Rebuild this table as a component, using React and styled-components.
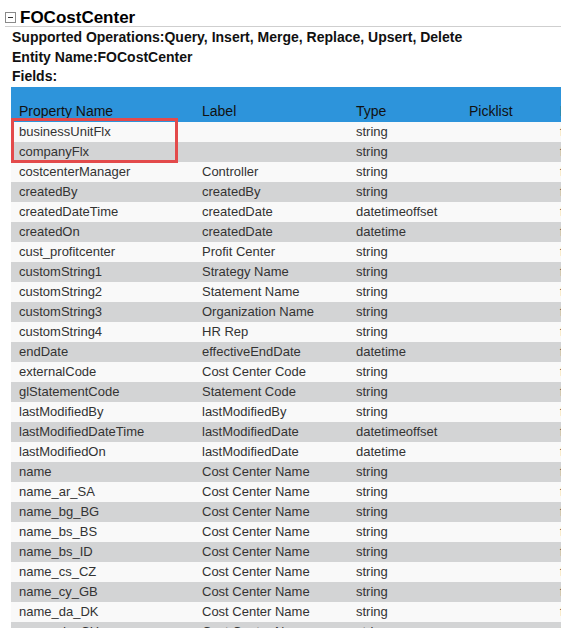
import React from 'react'
import styled, { createGlobalStyle } from 'styled-components'

const GlobalStyle = createGlobalStyle`
  html, body {
    margin: 0;
    padding: 0;
    background: #fff;
    overflow: hidden;
  }
  body {
    font-family: "Liberation Sans", Arial, sans-serif;
    color: #222;
  }
`

const fields = [
  ['businessUnitFlx', '', 'string'],
  ['companyFlx', '', 'string'],
  ['costcenterManager', 'Controller', 'string'],
  ['createdBy', 'createdBy', 'string'],
  ['createdDateTime', 'createdDate', 'datetimeoffset'],
  ['createdOn', 'createdDate', 'datetime'],
  ['cust_profitcenter', 'Profit Center', 'string'],
  ['customString1', 'Strategy Name', 'string'],
  ['customString2', 'Statement Name', 'string'],
  ['customString3', 'Organization Name', 'string'],
  ['customString4', 'HR Rep', 'string'],
  ['endDate', 'effectiveEndDate', 'datetime'],
  ['externalCode', 'Cost Center Code', 'string'],
  ['glStatementCode', 'Statement Code', 'string'],
  ['lastModifiedBy', 'lastModifiedBy', 'string'],
  ['lastModifiedDateTime', 'lastModifiedDate', 'datetimeoffset'],
  ['lastModifiedOn', 'lastModifiedDate', 'datetime'],
  ['name', 'Cost Center Name', 'string'],
  ['name_ar_SA', 'Cost Center Name', 'string'],
  ['name_bg_BG', 'Cost Center Name', 'string'],
  ['name_bs_BS', 'Cost Center Name', 'string'],
  ['name_bs_ID', 'Cost Center Name', 'string'],
  ['name_cs_CZ', 'Cost Center Name', 'string'],
  ['name_cy_GB', 'Cost Center Name', 'string'],
  ['name_da_DK', 'Cost Center Name', 'string'],
  ['name_de_CH', 'Cost Center Name', 'string'],
]

export default function App() {
  return (
    <>
      <GlobalStyle />
      <Page>
        <TitleBar>
          <Toggle />
          <Title>FOCostCenter</Title>
        </TitleBar>
        <Info>
          <InfoLine>Supported Operations:Query, Insert, Merge, Replace, Upsert, Delete</InfoLine>
          <InfoLine>Entity Name:FOCostCenter</InfoLine>
          <InfoLine>Fields:</InfoLine>
        </Info>
        <TableWrap>
          <Table>
            <colgroup>
              <col style={{ width: 183 }} />
              <col style={{ width: 154 }} />
              <col style={{ width: 113 }} />
              <col style={{ width: 91 }} />
              <col style={{ width: 120 }} />
            </colgroup>
            <thead>
              <tr>
                <Th>Property Name</Th>
                <Th>Label</Th>
                <Th>Type</Th>
                <Th>Picklist</Th>
                <Th>Required</Th>
              </tr>
            </thead>
            <tbody>
              {fields.map(([name, label, type], i) => (
                <Row key={name} $alt={i % 2 === 1}>
                  <Td>{name}</Td>
                  <Td>{label}</Td>
                  <Td>{type}</Td>
                  <Td></Td>
                  <Td>false</Td>
                </Row>
              ))}
            </tbody>
          </Table>
          <Highlight />
        </TableWrap>
      </Page>
    </>
  )
}

const Page = styled.div`
  width: 561px;
  height: 628px;
  overflow: hidden;
`

const TitleBar = styled.div`
  display: flex;
  align-items: center;
  margin: 10px 0 0 5px;
  height: 15px;
  padding-bottom: 1px;
  border-bottom: 1px solid #cfcfcf;
`

const Toggle = styled.span`
  position: relative;
  width: 9px;
  height: 9px;
  border: 1px solid #8a8a8a;
  background: #fff;
  margin-right: 4px;
  &::after {
    content: '';
    position: absolute;
    left: 2px;
    top: 4px;
    width: 5px;
    height: 1px;
    background: #333;
  }
`

const Title = styled.span`
  font-size: 17px;
  font-weight: bold;
  color: #000;
  line-height: 16px;
`

const Info = styled.div`
  padding: 1px 0 0 12px;
`

const InfoLine = styled.div`
  font-size: 14px;
  font-weight: bold;
  color: #111;
  line-height: 19.5px;
`

const TableWrap = styled.div`
  position: relative;
  margin: 0 0 0 11px;
`

const Table = styled.table`
  border-collapse: collapse;
  table-layout: fixed;
  width: 661px;
  font-size: 13px;
`

const Th = styled.th`
  background: #2d94db;
  height: 35px;
  padding: 0 8px 3px;
  box-sizing: border-box;
  text-align: left;
  vertical-align: bottom;
  font-weight: normal;
  font-size: 14px;
  color: #111;
  white-space: nowrap;
`

const Row = styled.tr`
  background: ${p => (p.$alt ? '#d3d4d5' : '#f9f9f9')};
`

const Td = styled.td`
  height: 20px;
  padding: 0 8px;
  box-sizing: border-box;
  color: #333;
  white-space: nowrap;
  overflow: hidden;
`

const Highlight = styled.div`
  position: absolute;
  left: 0;
  top: 31px;
  width: 167px;
  height: 45px;
  box-sizing: border-box;
  border: 3px solid #e34a4b;
  pointer-events: none;
`
